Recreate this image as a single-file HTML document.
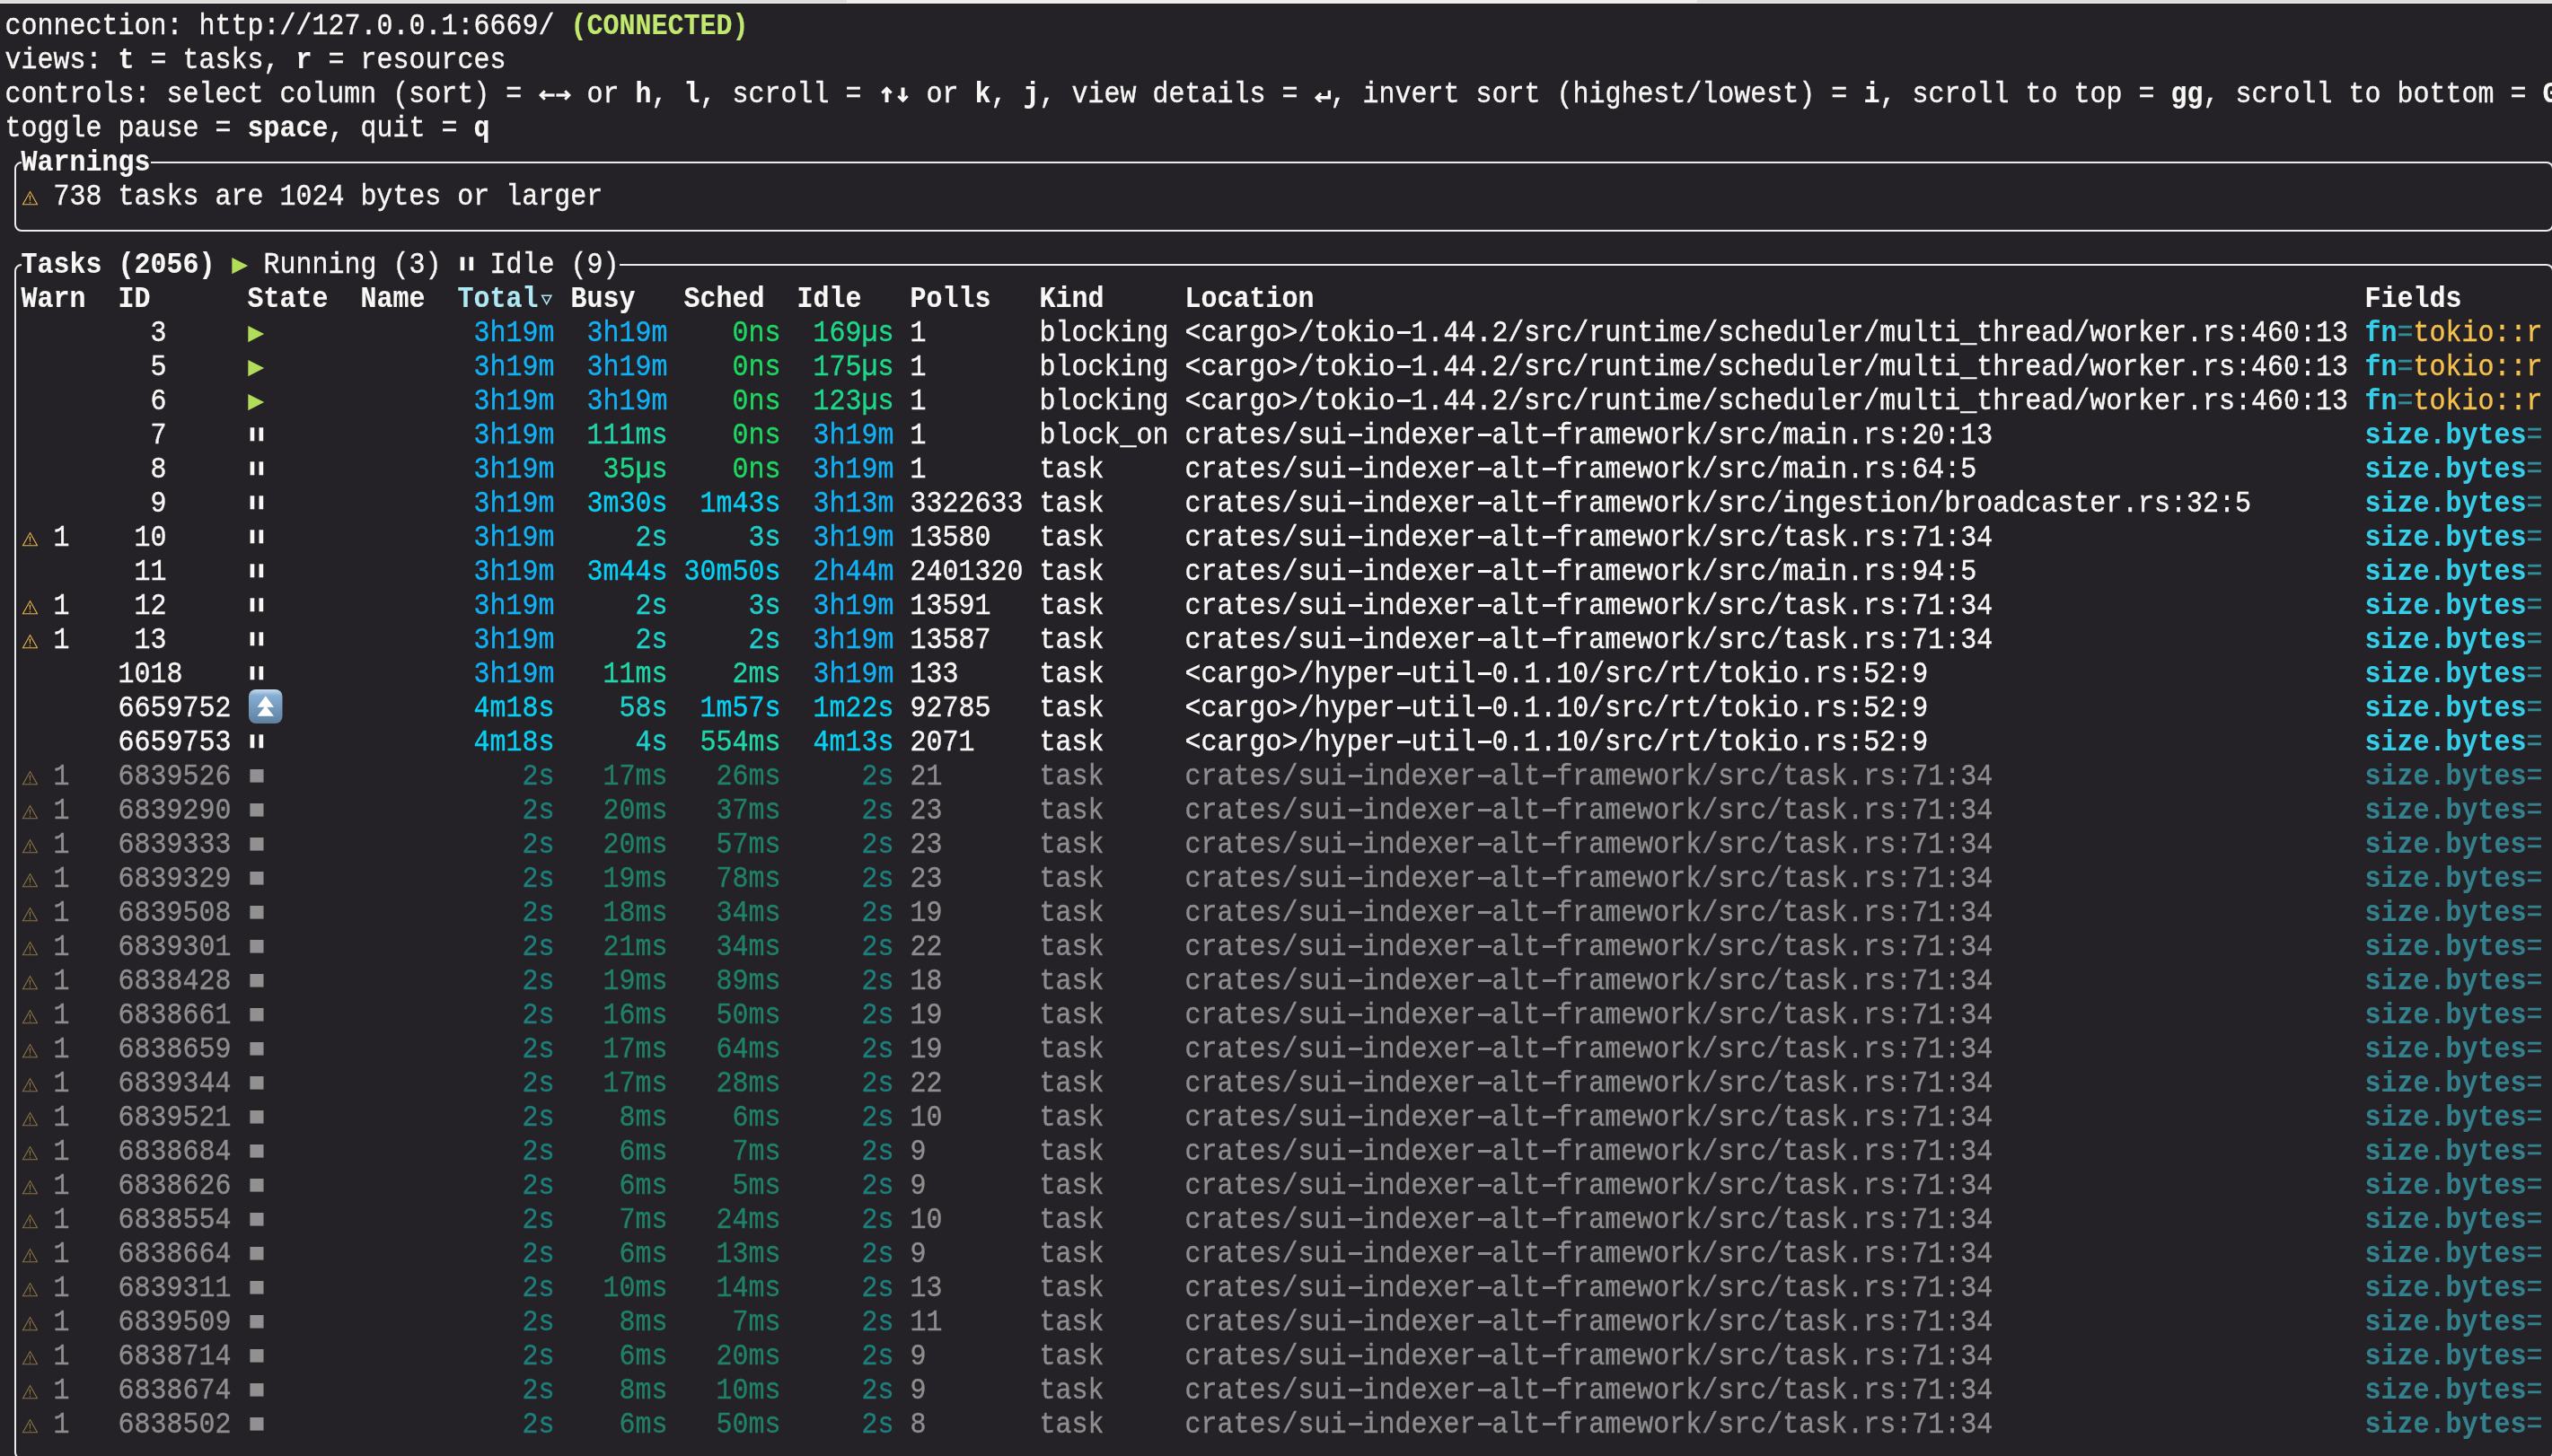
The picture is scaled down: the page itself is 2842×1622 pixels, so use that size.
<!DOCTYPE html><html><head><meta charset="utf-8"><style>
html,body{margin:0;padding:0}
body{width:2842px;height:1622px;background:#242226;overflow:hidden;position:relative}
.t{position:absolute;font-family:"Liberation Mono",monospace;font-size:29.9939px;line-height:38px;height:38px;white-space:pre;transform:scaleY(1.09);transform-origin:0 27.0px}
.t{-webkit-text-stroke:0.35px currentColor} .b{font-weight:bold;-webkit-text-stroke:0.1px currentColor}
.w{color:#f8f8f6} .g{color:#8e8e8e} .grn{color:#c1e86f} .tot{color:#aee9f4}
.ns{color:#1ed760} .us{color:#1ed88a} .ms{color:#20d6a8} .s{color:#1dd0cb} .m{color:#08d0f4} .h{color:#12b0f4}
.ds{color:#1d7f7c} .dms{color:#208168}
.fld{color:#36cde8} .fldd{color:#34818d} .eq{color:#2f8c98} .eqd{color:#34818d} .yel{color:#f5c04c}
.box{position:absolute;border:2.2px solid #ececec;border-radius:8px;box-sizing:border-box}
.ic{position:absolute}
</style></head><body>
<div style="position:absolute;left:0;top:0;width:943px;height:3px;background:#dfdedc"></div>
<div style="position:absolute;left:943px;top:0;width:947px;height:3px;background:#efeeec"></div>
<div style="position:absolute;left:1890px;top:0;width:952px;height:3px;background:#dfdedc"></div>
<div style="position:absolute;left:0;top:3px;width:2842px;height:1px;background:#f0f0f0"></div>
<div style="position:absolute;left:0;top:4px;width:2842px;height:1px;background:#1b1a1e"></div>
<div class="box" style="left:16px;top:179.7px;width:2828px;height:78.4px"></div>
<div class="box" style="left:16px;top:294.1px;width:2828px;height:1331.6px;border-radius:8px"></div>
<div style="position:absolute;left:23.5px;top:176px;width:144.0px;height:8px;background:#242226"></div>
<div style="position:absolute;left:23.5px;top:290px;width:666.0px;height:8px;background:#242226"></div>
<div style="position:absolute;left:0;top:0;width:2842px;height:1622px;will-change:transform">
<div class="t w" style="left:5.5px;top:11.07px">connection: http</div>
<div class="t w" style="left:293.5px;top:11.07px">:</div>
<div class="t w" style="left:311.5px;top:11.07px">//127.0.0.1:6669/ </div>
<div class="t grn b" style="left:635.5px;top:11.07px">(CONNECTED)</div>
<div class="t w" style="left:5.5px;top:49.07px">views: </div>
<div class="t w b" style="left:131.5px;top:49.07px">t</div>
<div class="t w" style="left:149.5px;top:49.07px"> = tasks, </div>
<div class="t w b" style="left:329.5px;top:49.07px">r</div>
<div class="t w" style="left:347.5px;top:49.07px"> = resources</div>
<div class="t w" style="left:5.5px;top:87.07px">controls: select column (sort) = </div>
<div class="t w b" style="left:599.5px;top:87.07px">  </div>
<div class="t w" style="left:635.5px;top:87.07px"> or </div>
<div class="t w b" style="left:707.5px;top:87.07px">h</div>
<div class="t w" style="left:725.5px;top:87.07px">, </div>
<div class="t w b" style="left:761.5px;top:87.07px">l</div>
<div class="t w" style="left:779.5px;top:87.07px">, scroll = </div>
<div class="t w b" style="left:977.5px;top:87.07px">  </div>
<div class="t w" style="left:1013.5px;top:87.07px"> or </div>
<div class="t w b" style="left:1085.5px;top:87.07px">k</div>
<div class="t w" style="left:1103.5px;top:87.07px">, </div>
<div class="t w b" style="left:1139.5px;top:87.07px">j</div>
<div class="t w" style="left:1157.5px;top:87.07px">, view details = </div>
<div class="t w b" style="left:1463.5px;top:87.07px"> </div>
<div class="t w" style="left:1481.5px;top:87.07px">, invert sort (highest/lowest) = </div>
<div class="t w b" style="left:2075.5px;top:87.07px">i</div>
<div class="t w" style="left:2093.5px;top:87.07px">, scroll to top = </div>
<div class="t w b" style="left:2417.5px;top:87.07px">gg</div>
<div class="t w" style="left:2453.5px;top:87.07px">, scroll to bottom = </div>
<div class="t w b" style="left:2831.5px;top:87.07px">G</div>
<div class="t w" style="left:5.5px;top:125.07px">toggle pause = </div>
<div class="t w b" style="left:275.5px;top:125.07px">space</div>
<div class="t w" style="left:365.5px;top:125.07px">, quit = </div>
<div class="t w b" style="left:527.5px;top:125.07px">q</div>
<div class="t w b" style="left:23.5px;top:163.07px">Warnings</div>
<div class="t w" style="left:59.5px;top:201.07px">738 tasks are 1024 bytes or larger</div>
<div class="t w b" style="left:23.5px;top:277.07px">Tasks (2056)</div>
<div class="t w" style="left:293.5px;top:277.07px">Running (3)</div>
<div class="t w" style="left:545.5px;top:277.07px">Idle (9)</div>
<div class="t w b" style="left:23.5px;top:315.07px">Warn</div>
<div class="t w b" style="left:131.5px;top:315.07px">ID</div>
<div class="t w b" style="left:275.5px;top:315.07px">State</div>
<div class="t w b" style="left:401.5px;top:315.07px">Name</div>
<div class="t w b" style="left:635.5px;top:315.07px">Busy</div>
<div class="t w b" style="left:761.5px;top:315.07px">Sched</div>
<div class="t w b" style="left:887.5px;top:315.07px">Idle</div>
<div class="t w b" style="left:1013.5px;top:315.07px">Polls</div>
<div class="t w b" style="left:1157.5px;top:315.07px">Kind</div>
<div class="t w b" style="left:1319.5px;top:315.07px">Location</div>
<div class="t w b" style="left:2633.5px;top:315.07px">Fields</div>
<div class="t tot b" style="left:509.5px;top:315.07px">Total</div>
<div class="t w" style="left:167.5px;top:353.07px">3</div>
<div class="t h" style="left:527.5px;top:353.07px">3h19m</div>
<div class="t h" style="left:653.5px;top:353.07px">3h19m</div>
<div class="t ns" style="left:815.5px;top:353.07px">0ns</div>
<div class="t us" style="left:905.5px;top:353.07px">169µs</div>
<div class="t w" style="left:1013.5px;top:353.07px">1</div>
<div class="t w" style="left:1157.5px;top:353.07px">blocking</div>
<div style="position:absolute;left:1555.7px;top:368.87px;width:15.4px;height:3px;background:#f8f8f6"></div>
<div class="t w" style="left:1319.5px;top:353.07px">&lt;cargo&gt;/tokio 1.44.2/src/runtime/scheduler/multi_thread/worker.rs:460:13</div>
<div class="t fld b" style="left:2633.5px;top:353.07px">fn</div>
<div class="t eq" style="left:2669.5px;top:353.07px">=</div>
<div class="t yel" style="left:2687.5px;top:353.07px">tokio::r</div>
<div class="t w" style="left:167.5px;top:391.07px">5</div>
<div class="t h" style="left:527.5px;top:391.07px">3h19m</div>
<div class="t h" style="left:653.5px;top:391.07px">3h19m</div>
<div class="t ns" style="left:815.5px;top:391.07px">0ns</div>
<div class="t us" style="left:905.5px;top:391.07px">175µs</div>
<div class="t w" style="left:1013.5px;top:391.07px">1</div>
<div class="t w" style="left:1157.5px;top:391.07px">blocking</div>
<div style="position:absolute;left:1555.7px;top:406.87px;width:15.4px;height:3px;background:#f8f8f6"></div>
<div class="t w" style="left:1319.5px;top:391.07px">&lt;cargo&gt;/tokio 1.44.2/src/runtime/scheduler/multi_thread/worker.rs:460:13</div>
<div class="t fld b" style="left:2633.5px;top:391.07px">fn</div>
<div class="t eq" style="left:2669.5px;top:391.07px">=</div>
<div class="t yel" style="left:2687.5px;top:391.07px">tokio::r</div>
<div class="t w" style="left:167.5px;top:429.07px">6</div>
<div class="t h" style="left:527.5px;top:429.07px">3h19m</div>
<div class="t h" style="left:653.5px;top:429.07px">3h19m</div>
<div class="t ns" style="left:815.5px;top:429.07px">0ns</div>
<div class="t us" style="left:905.5px;top:429.07px">123µs</div>
<div class="t w" style="left:1013.5px;top:429.07px">1</div>
<div class="t w" style="left:1157.5px;top:429.07px">blocking</div>
<div style="position:absolute;left:1555.7px;top:444.87px;width:15.4px;height:3px;background:#f8f8f6"></div>
<div class="t w" style="left:1319.5px;top:429.07px">&lt;cargo&gt;/tokio 1.44.2/src/runtime/scheduler/multi_thread/worker.rs:460:13</div>
<div class="t fld b" style="left:2633.5px;top:429.07px">fn</div>
<div class="t eq" style="left:2669.5px;top:429.07px">=</div>
<div class="t yel" style="left:2687.5px;top:429.07px">tokio::r</div>
<div class="t w" style="left:167.5px;top:467.07px">7</div>
<div class="t h" style="left:527.5px;top:467.07px">3h19m</div>
<div class="t ms" style="left:653.5px;top:467.07px">111ms</div>
<div class="t ns" style="left:815.5px;top:467.07px">0ns</div>
<div class="t h" style="left:905.5px;top:467.07px">3h19m</div>
<div class="t w" style="left:1013.5px;top:467.07px">1</div>
<div class="t w" style="left:1157.5px;top:467.07px">block_on</div>
<div style="position:absolute;left:1501.7px;top:482.87px;width:15.4px;height:3px;background:#f8f8f6"></div>
<div style="position:absolute;left:1645.7px;top:482.87px;width:15.4px;height:3px;background:#f8f8f6"></div>
<div style="position:absolute;left:1717.7px;top:482.87px;width:15.4px;height:3px;background:#f8f8f6"></div>
<div class="t w" style="left:1319.5px;top:467.07px">crates/sui indexer alt framework/src/main.rs:20:13</div>
<div class="t fld b" style="left:2633.5px;top:467.07px">size.bytes</div>
<div class="t eq" style="left:2813.5px;top:467.07px">=</div>
<div class="t w" style="left:167.5px;top:505.07px">8</div>
<div class="t h" style="left:527.5px;top:505.07px">3h19m</div>
<div class="t us" style="left:671.5px;top:505.07px">35µs</div>
<div class="t ns" style="left:815.5px;top:505.07px">0ns</div>
<div class="t h" style="left:905.5px;top:505.07px">3h19m</div>
<div class="t w" style="left:1013.5px;top:505.07px">1</div>
<div class="t w" style="left:1157.5px;top:505.07px">task</div>
<div style="position:absolute;left:1501.7px;top:520.87px;width:15.4px;height:3px;background:#f8f8f6"></div>
<div style="position:absolute;left:1645.7px;top:520.87px;width:15.4px;height:3px;background:#f8f8f6"></div>
<div style="position:absolute;left:1717.7px;top:520.87px;width:15.4px;height:3px;background:#f8f8f6"></div>
<div class="t w" style="left:1319.5px;top:505.07px">crates/sui indexer alt framework/src/main.rs:64:5</div>
<div class="t fld b" style="left:2633.5px;top:505.07px">size.bytes</div>
<div class="t eq" style="left:2813.5px;top:505.07px">=</div>
<div class="t w" style="left:167.5px;top:543.07px">9</div>
<div class="t h" style="left:527.5px;top:543.07px">3h19m</div>
<div class="t m" style="left:653.5px;top:543.07px">3m30s</div>
<div class="t m" style="left:779.5px;top:543.07px">1m43s</div>
<div class="t h" style="left:905.5px;top:543.07px">3h13m</div>
<div class="t w" style="left:1013.5px;top:543.07px">3322633</div>
<div class="t w" style="left:1157.5px;top:543.07px">task</div>
<div style="position:absolute;left:1501.7px;top:558.87px;width:15.4px;height:3px;background:#f8f8f6"></div>
<div style="position:absolute;left:1645.7px;top:558.87px;width:15.4px;height:3px;background:#f8f8f6"></div>
<div style="position:absolute;left:1717.7px;top:558.87px;width:15.4px;height:3px;background:#f8f8f6"></div>
<div class="t w" style="left:1319.5px;top:543.07px">crates/sui indexer alt framework/src/ingestion/broadcaster.rs:32:5</div>
<div class="t fld b" style="left:2633.5px;top:543.07px">size.bytes</div>
<div class="t eq" style="left:2813.5px;top:543.07px">=</div>
<div class="t w" style="left:59.5px;top:581.07px">1</div>
<div class="t w" style="left:149.5px;top:581.07px">10</div>
<div class="t h" style="left:527.5px;top:581.07px">3h19m</div>
<div class="t s" style="left:707.5px;top:581.07px">2s</div>
<div class="t s" style="left:833.5px;top:581.07px">3s</div>
<div class="t h" style="left:905.5px;top:581.07px">3h19m</div>
<div class="t w" style="left:1013.5px;top:581.07px">13580</div>
<div class="t w" style="left:1157.5px;top:581.07px">task</div>
<div style="position:absolute;left:1501.7px;top:596.87px;width:15.4px;height:3px;background:#f8f8f6"></div>
<div style="position:absolute;left:1645.7px;top:596.87px;width:15.4px;height:3px;background:#f8f8f6"></div>
<div style="position:absolute;left:1717.7px;top:596.87px;width:15.4px;height:3px;background:#f8f8f6"></div>
<div class="t w" style="left:1319.5px;top:581.07px">crates/sui indexer alt framework/src/task.rs:71:34</div>
<div class="t fld b" style="left:2633.5px;top:581.07px">size.bytes</div>
<div class="t eq" style="left:2813.5px;top:581.07px">=</div>
<div class="t w" style="left:149.5px;top:619.07px">11</div>
<div class="t h" style="left:527.5px;top:619.07px">3h19m</div>
<div class="t m" style="left:653.5px;top:619.07px">3m44s</div>
<div class="t m" style="left:761.5px;top:619.07px">30m50s</div>
<div class="t h" style="left:905.5px;top:619.07px">2h44m</div>
<div class="t w" style="left:1013.5px;top:619.07px">2401320</div>
<div class="t w" style="left:1157.5px;top:619.07px">task</div>
<div style="position:absolute;left:1501.7px;top:634.87px;width:15.4px;height:3px;background:#f8f8f6"></div>
<div style="position:absolute;left:1645.7px;top:634.87px;width:15.4px;height:3px;background:#f8f8f6"></div>
<div style="position:absolute;left:1717.7px;top:634.87px;width:15.4px;height:3px;background:#f8f8f6"></div>
<div class="t w" style="left:1319.5px;top:619.07px">crates/sui indexer alt framework/src/main.rs:94:5</div>
<div class="t fld b" style="left:2633.5px;top:619.07px">size.bytes</div>
<div class="t eq" style="left:2813.5px;top:619.07px">=</div>
<div class="t w" style="left:59.5px;top:657.07px">1</div>
<div class="t w" style="left:149.5px;top:657.07px">12</div>
<div class="t h" style="left:527.5px;top:657.07px">3h19m</div>
<div class="t s" style="left:707.5px;top:657.07px">2s</div>
<div class="t s" style="left:833.5px;top:657.07px">3s</div>
<div class="t h" style="left:905.5px;top:657.07px">3h19m</div>
<div class="t w" style="left:1013.5px;top:657.07px">13591</div>
<div class="t w" style="left:1157.5px;top:657.07px">task</div>
<div style="position:absolute;left:1501.7px;top:672.87px;width:15.4px;height:3px;background:#f8f8f6"></div>
<div style="position:absolute;left:1645.7px;top:672.87px;width:15.4px;height:3px;background:#f8f8f6"></div>
<div style="position:absolute;left:1717.7px;top:672.87px;width:15.4px;height:3px;background:#f8f8f6"></div>
<div class="t w" style="left:1319.5px;top:657.07px">crates/sui indexer alt framework/src/task.rs:71:34</div>
<div class="t fld b" style="left:2633.5px;top:657.07px">size.bytes</div>
<div class="t eq" style="left:2813.5px;top:657.07px">=</div>
<div class="t w" style="left:59.5px;top:695.07px">1</div>
<div class="t w" style="left:149.5px;top:695.07px">13</div>
<div class="t h" style="left:527.5px;top:695.07px">3h19m</div>
<div class="t s" style="left:707.5px;top:695.07px">2s</div>
<div class="t s" style="left:833.5px;top:695.07px">2s</div>
<div class="t h" style="left:905.5px;top:695.07px">3h19m</div>
<div class="t w" style="left:1013.5px;top:695.07px">13587</div>
<div class="t w" style="left:1157.5px;top:695.07px">task</div>
<div style="position:absolute;left:1501.7px;top:710.87px;width:15.4px;height:3px;background:#f8f8f6"></div>
<div style="position:absolute;left:1645.7px;top:710.87px;width:15.4px;height:3px;background:#f8f8f6"></div>
<div style="position:absolute;left:1717.7px;top:710.87px;width:15.4px;height:3px;background:#f8f8f6"></div>
<div class="t w" style="left:1319.5px;top:695.07px">crates/sui indexer alt framework/src/task.rs:71:34</div>
<div class="t fld b" style="left:2633.5px;top:695.07px">size.bytes</div>
<div class="t eq" style="left:2813.5px;top:695.07px">=</div>
<div class="t w" style="left:131.5px;top:733.07px">1018</div>
<div class="t h" style="left:527.5px;top:733.07px">3h19m</div>
<div class="t ms" style="left:671.5px;top:733.07px">11ms</div>
<div class="t ms" style="left:815.5px;top:733.07px">2ms</div>
<div class="t h" style="left:905.5px;top:733.07px">3h19m</div>
<div class="t w" style="left:1013.5px;top:733.07px">133</div>
<div class="t w" style="left:1157.5px;top:733.07px">task</div>
<div style="position:absolute;left:1555.7px;top:748.87px;width:15.4px;height:3px;background:#f8f8f6"></div>
<div style="position:absolute;left:1645.7px;top:748.87px;width:15.4px;height:3px;background:#f8f8f6"></div>
<div class="t w" style="left:1319.5px;top:733.07px">&lt;cargo&gt;/hyper util 0.1.10/src/rt/tokio.rs:52:9</div>
<div class="t fld b" style="left:2633.5px;top:733.07px">size.bytes</div>
<div class="t eq" style="left:2813.5px;top:733.07px">=</div>
<div class="t w" style="left:131.5px;top:771.07px">6659752</div>
<div class="t m" style="left:527.5px;top:771.07px">4m18s</div>
<div class="t s" style="left:689.5px;top:771.07px">58s</div>
<div class="t m" style="left:779.5px;top:771.07px">1m57s</div>
<div class="t m" style="left:905.5px;top:771.07px">1m22s</div>
<div class="t w" style="left:1013.5px;top:771.07px">92785</div>
<div class="t w" style="left:1157.5px;top:771.07px">task</div>
<div style="position:absolute;left:1555.7px;top:786.87px;width:15.4px;height:3px;background:#f8f8f6"></div>
<div style="position:absolute;left:1645.7px;top:786.87px;width:15.4px;height:3px;background:#f8f8f6"></div>
<div class="t w" style="left:1319.5px;top:771.07px">&lt;cargo&gt;/hyper util 0.1.10/src/rt/tokio.rs:52:9</div>
<div class="t fld b" style="left:2633.5px;top:771.07px">size.bytes</div>
<div class="t eq" style="left:2813.5px;top:771.07px">=</div>
<div class="t w" style="left:131.5px;top:809.07px">6659753</div>
<div class="t m" style="left:527.5px;top:809.07px">4m18s</div>
<div class="t s" style="left:707.5px;top:809.07px">4s</div>
<div class="t ms" style="left:779.5px;top:809.07px">554ms</div>
<div class="t m" style="left:905.5px;top:809.07px">4m13s</div>
<div class="t w" style="left:1013.5px;top:809.07px">2071</div>
<div class="t w" style="left:1157.5px;top:809.07px">task</div>
<div style="position:absolute;left:1555.7px;top:824.87px;width:15.4px;height:3px;background:#f8f8f6"></div>
<div style="position:absolute;left:1645.7px;top:824.87px;width:15.4px;height:3px;background:#f8f8f6"></div>
<div class="t w" style="left:1319.5px;top:809.07px">&lt;cargo&gt;/hyper util 0.1.10/src/rt/tokio.rs:52:9</div>
<div class="t fld b" style="left:2633.5px;top:809.07px">size.bytes</div>
<div class="t eq" style="left:2813.5px;top:809.07px">=</div>
<div class="t g" style="left:59.5px;top:847.07px">1</div>
<div class="t g" style="left:131.5px;top:847.07px">6839526</div>
<div class="t ds" style="left:581.5px;top:847.07px">2s</div>
<div class="t dms" style="left:671.5px;top:847.07px">17ms</div>
<div class="t dms" style="left:797.5px;top:847.07px">26ms</div>
<div class="t ds" style="left:959.5px;top:847.07px">2s</div>
<div class="t g" style="left:1013.5px;top:847.07px">21</div>
<div class="t g" style="left:1157.5px;top:847.07px">task</div>
<div style="position:absolute;left:1501.7px;top:862.87px;width:15.4px;height:3px;background:#8e8e8e"></div>
<div style="position:absolute;left:1645.7px;top:862.87px;width:15.4px;height:3px;background:#8e8e8e"></div>
<div style="position:absolute;left:1717.7px;top:862.87px;width:15.4px;height:3px;background:#8e8e8e"></div>
<div class="t g" style="left:1319.5px;top:847.07px">crates/sui indexer alt framework/src/task.rs:71:34</div>
<div class="t fldd b" style="left:2633.5px;top:847.07px">size.bytes</div>
<div class="t eqd" style="left:2813.5px;top:847.07px">=</div>
<div class="t g" style="left:59.5px;top:885.07px">1</div>
<div class="t g" style="left:131.5px;top:885.07px">6839290</div>
<div class="t ds" style="left:581.5px;top:885.07px">2s</div>
<div class="t dms" style="left:671.5px;top:885.07px">20ms</div>
<div class="t dms" style="left:797.5px;top:885.07px">37ms</div>
<div class="t ds" style="left:959.5px;top:885.07px">2s</div>
<div class="t g" style="left:1013.5px;top:885.07px">23</div>
<div class="t g" style="left:1157.5px;top:885.07px">task</div>
<div style="position:absolute;left:1501.7px;top:900.87px;width:15.4px;height:3px;background:#8e8e8e"></div>
<div style="position:absolute;left:1645.7px;top:900.87px;width:15.4px;height:3px;background:#8e8e8e"></div>
<div style="position:absolute;left:1717.7px;top:900.87px;width:15.4px;height:3px;background:#8e8e8e"></div>
<div class="t g" style="left:1319.5px;top:885.07px">crates/sui indexer alt framework/src/task.rs:71:34</div>
<div class="t fldd b" style="left:2633.5px;top:885.07px">size.bytes</div>
<div class="t eqd" style="left:2813.5px;top:885.07px">=</div>
<div class="t g" style="left:59.5px;top:923.07px">1</div>
<div class="t g" style="left:131.5px;top:923.07px">6839333</div>
<div class="t ds" style="left:581.5px;top:923.07px">2s</div>
<div class="t dms" style="left:671.5px;top:923.07px">20ms</div>
<div class="t dms" style="left:797.5px;top:923.07px">57ms</div>
<div class="t ds" style="left:959.5px;top:923.07px">2s</div>
<div class="t g" style="left:1013.5px;top:923.07px">23</div>
<div class="t g" style="left:1157.5px;top:923.07px">task</div>
<div style="position:absolute;left:1501.7px;top:938.87px;width:15.4px;height:3px;background:#8e8e8e"></div>
<div style="position:absolute;left:1645.7px;top:938.87px;width:15.4px;height:3px;background:#8e8e8e"></div>
<div style="position:absolute;left:1717.7px;top:938.87px;width:15.4px;height:3px;background:#8e8e8e"></div>
<div class="t g" style="left:1319.5px;top:923.07px">crates/sui indexer alt framework/src/task.rs:71:34</div>
<div class="t fldd b" style="left:2633.5px;top:923.07px">size.bytes</div>
<div class="t eqd" style="left:2813.5px;top:923.07px">=</div>
<div class="t g" style="left:59.5px;top:961.07px">1</div>
<div class="t g" style="left:131.5px;top:961.07px">6839329</div>
<div class="t ds" style="left:581.5px;top:961.07px">2s</div>
<div class="t dms" style="left:671.5px;top:961.07px">19ms</div>
<div class="t dms" style="left:797.5px;top:961.07px">78ms</div>
<div class="t ds" style="left:959.5px;top:961.07px">2s</div>
<div class="t g" style="left:1013.5px;top:961.07px">23</div>
<div class="t g" style="left:1157.5px;top:961.07px">task</div>
<div style="position:absolute;left:1501.7px;top:976.87px;width:15.4px;height:3px;background:#8e8e8e"></div>
<div style="position:absolute;left:1645.7px;top:976.87px;width:15.4px;height:3px;background:#8e8e8e"></div>
<div style="position:absolute;left:1717.7px;top:976.87px;width:15.4px;height:3px;background:#8e8e8e"></div>
<div class="t g" style="left:1319.5px;top:961.07px">crates/sui indexer alt framework/src/task.rs:71:34</div>
<div class="t fldd b" style="left:2633.5px;top:961.07px">size.bytes</div>
<div class="t eqd" style="left:2813.5px;top:961.07px">=</div>
<div class="t g" style="left:59.5px;top:999.07px">1</div>
<div class="t g" style="left:131.5px;top:999.07px">6839508</div>
<div class="t ds" style="left:581.5px;top:999.07px">2s</div>
<div class="t dms" style="left:671.5px;top:999.07px">18ms</div>
<div class="t dms" style="left:797.5px;top:999.07px">34ms</div>
<div class="t ds" style="left:959.5px;top:999.07px">2s</div>
<div class="t g" style="left:1013.5px;top:999.07px">19</div>
<div class="t g" style="left:1157.5px;top:999.07px">task</div>
<div style="position:absolute;left:1501.7px;top:1014.87px;width:15.4px;height:3px;background:#8e8e8e"></div>
<div style="position:absolute;left:1645.7px;top:1014.87px;width:15.4px;height:3px;background:#8e8e8e"></div>
<div style="position:absolute;left:1717.7px;top:1014.87px;width:15.4px;height:3px;background:#8e8e8e"></div>
<div class="t g" style="left:1319.5px;top:999.07px">crates/sui indexer alt framework/src/task.rs:71:34</div>
<div class="t fldd b" style="left:2633.5px;top:999.07px">size.bytes</div>
<div class="t eqd" style="left:2813.5px;top:999.07px">=</div>
<div class="t g" style="left:59.5px;top:1037.07px">1</div>
<div class="t g" style="left:131.5px;top:1037.07px">6839301</div>
<div class="t ds" style="left:581.5px;top:1037.07px">2s</div>
<div class="t dms" style="left:671.5px;top:1037.07px">21ms</div>
<div class="t dms" style="left:797.5px;top:1037.07px">34ms</div>
<div class="t ds" style="left:959.5px;top:1037.07px">2s</div>
<div class="t g" style="left:1013.5px;top:1037.07px">22</div>
<div class="t g" style="left:1157.5px;top:1037.07px">task</div>
<div style="position:absolute;left:1501.7px;top:1052.87px;width:15.4px;height:3px;background:#8e8e8e"></div>
<div style="position:absolute;left:1645.7px;top:1052.87px;width:15.4px;height:3px;background:#8e8e8e"></div>
<div style="position:absolute;left:1717.7px;top:1052.87px;width:15.4px;height:3px;background:#8e8e8e"></div>
<div class="t g" style="left:1319.5px;top:1037.07px">crates/sui indexer alt framework/src/task.rs:71:34</div>
<div class="t fldd b" style="left:2633.5px;top:1037.07px">size.bytes</div>
<div class="t eqd" style="left:2813.5px;top:1037.07px">=</div>
<div class="t g" style="left:59.5px;top:1075.07px">1</div>
<div class="t g" style="left:131.5px;top:1075.07px">6838428</div>
<div class="t ds" style="left:581.5px;top:1075.07px">2s</div>
<div class="t dms" style="left:671.5px;top:1075.07px">19ms</div>
<div class="t dms" style="left:797.5px;top:1075.07px">89ms</div>
<div class="t ds" style="left:959.5px;top:1075.07px">2s</div>
<div class="t g" style="left:1013.5px;top:1075.07px">18</div>
<div class="t g" style="left:1157.5px;top:1075.07px">task</div>
<div style="position:absolute;left:1501.7px;top:1090.87px;width:15.4px;height:3px;background:#8e8e8e"></div>
<div style="position:absolute;left:1645.7px;top:1090.87px;width:15.4px;height:3px;background:#8e8e8e"></div>
<div style="position:absolute;left:1717.7px;top:1090.87px;width:15.4px;height:3px;background:#8e8e8e"></div>
<div class="t g" style="left:1319.5px;top:1075.07px">crates/sui indexer alt framework/src/task.rs:71:34</div>
<div class="t fldd b" style="left:2633.5px;top:1075.07px">size.bytes</div>
<div class="t eqd" style="left:2813.5px;top:1075.07px">=</div>
<div class="t g" style="left:59.5px;top:1113.07px">1</div>
<div class="t g" style="left:131.5px;top:1113.07px">6838661</div>
<div class="t ds" style="left:581.5px;top:1113.07px">2s</div>
<div class="t dms" style="left:671.5px;top:1113.07px">16ms</div>
<div class="t dms" style="left:797.5px;top:1113.07px">50ms</div>
<div class="t ds" style="left:959.5px;top:1113.07px">2s</div>
<div class="t g" style="left:1013.5px;top:1113.07px">19</div>
<div class="t g" style="left:1157.5px;top:1113.07px">task</div>
<div style="position:absolute;left:1501.7px;top:1128.87px;width:15.4px;height:3px;background:#8e8e8e"></div>
<div style="position:absolute;left:1645.7px;top:1128.87px;width:15.4px;height:3px;background:#8e8e8e"></div>
<div style="position:absolute;left:1717.7px;top:1128.87px;width:15.4px;height:3px;background:#8e8e8e"></div>
<div class="t g" style="left:1319.5px;top:1113.07px">crates/sui indexer alt framework/src/task.rs:71:34</div>
<div class="t fldd b" style="left:2633.5px;top:1113.07px">size.bytes</div>
<div class="t eqd" style="left:2813.5px;top:1113.07px">=</div>
<div class="t g" style="left:59.5px;top:1151.07px">1</div>
<div class="t g" style="left:131.5px;top:1151.07px">6838659</div>
<div class="t ds" style="left:581.5px;top:1151.07px">2s</div>
<div class="t dms" style="left:671.5px;top:1151.07px">17ms</div>
<div class="t dms" style="left:797.5px;top:1151.07px">64ms</div>
<div class="t ds" style="left:959.5px;top:1151.07px">2s</div>
<div class="t g" style="left:1013.5px;top:1151.07px">19</div>
<div class="t g" style="left:1157.5px;top:1151.07px">task</div>
<div style="position:absolute;left:1501.7px;top:1166.87px;width:15.4px;height:3px;background:#8e8e8e"></div>
<div style="position:absolute;left:1645.7px;top:1166.87px;width:15.4px;height:3px;background:#8e8e8e"></div>
<div style="position:absolute;left:1717.7px;top:1166.87px;width:15.4px;height:3px;background:#8e8e8e"></div>
<div class="t g" style="left:1319.5px;top:1151.07px">crates/sui indexer alt framework/src/task.rs:71:34</div>
<div class="t fldd b" style="left:2633.5px;top:1151.07px">size.bytes</div>
<div class="t eqd" style="left:2813.5px;top:1151.07px">=</div>
<div class="t g" style="left:59.5px;top:1189.07px">1</div>
<div class="t g" style="left:131.5px;top:1189.07px">6839344</div>
<div class="t ds" style="left:581.5px;top:1189.07px">2s</div>
<div class="t dms" style="left:671.5px;top:1189.07px">17ms</div>
<div class="t dms" style="left:797.5px;top:1189.07px">28ms</div>
<div class="t ds" style="left:959.5px;top:1189.07px">2s</div>
<div class="t g" style="left:1013.5px;top:1189.07px">22</div>
<div class="t g" style="left:1157.5px;top:1189.07px">task</div>
<div style="position:absolute;left:1501.7px;top:1204.87px;width:15.4px;height:3px;background:#8e8e8e"></div>
<div style="position:absolute;left:1645.7px;top:1204.87px;width:15.4px;height:3px;background:#8e8e8e"></div>
<div style="position:absolute;left:1717.7px;top:1204.87px;width:15.4px;height:3px;background:#8e8e8e"></div>
<div class="t g" style="left:1319.5px;top:1189.07px">crates/sui indexer alt framework/src/task.rs:71:34</div>
<div class="t fldd b" style="left:2633.5px;top:1189.07px">size.bytes</div>
<div class="t eqd" style="left:2813.5px;top:1189.07px">=</div>
<div class="t g" style="left:59.5px;top:1227.07px">1</div>
<div class="t g" style="left:131.5px;top:1227.07px">6839521</div>
<div class="t ds" style="left:581.5px;top:1227.07px">2s</div>
<div class="t dms" style="left:689.5px;top:1227.07px">8ms</div>
<div class="t dms" style="left:815.5px;top:1227.07px">6ms</div>
<div class="t ds" style="left:959.5px;top:1227.07px">2s</div>
<div class="t g" style="left:1013.5px;top:1227.07px">10</div>
<div class="t g" style="left:1157.5px;top:1227.07px">task</div>
<div style="position:absolute;left:1501.7px;top:1242.87px;width:15.4px;height:3px;background:#8e8e8e"></div>
<div style="position:absolute;left:1645.7px;top:1242.87px;width:15.4px;height:3px;background:#8e8e8e"></div>
<div style="position:absolute;left:1717.7px;top:1242.87px;width:15.4px;height:3px;background:#8e8e8e"></div>
<div class="t g" style="left:1319.5px;top:1227.07px">crates/sui indexer alt framework/src/task.rs:71:34</div>
<div class="t fldd b" style="left:2633.5px;top:1227.07px">size.bytes</div>
<div class="t eqd" style="left:2813.5px;top:1227.07px">=</div>
<div class="t g" style="left:59.5px;top:1265.07px">1</div>
<div class="t g" style="left:131.5px;top:1265.07px">6838684</div>
<div class="t ds" style="left:581.5px;top:1265.07px">2s</div>
<div class="t dms" style="left:689.5px;top:1265.07px">6ms</div>
<div class="t dms" style="left:815.5px;top:1265.07px">7ms</div>
<div class="t ds" style="left:959.5px;top:1265.07px">2s</div>
<div class="t g" style="left:1013.5px;top:1265.07px">9</div>
<div class="t g" style="left:1157.5px;top:1265.07px">task</div>
<div style="position:absolute;left:1501.7px;top:1280.87px;width:15.4px;height:3px;background:#8e8e8e"></div>
<div style="position:absolute;left:1645.7px;top:1280.87px;width:15.4px;height:3px;background:#8e8e8e"></div>
<div style="position:absolute;left:1717.7px;top:1280.87px;width:15.4px;height:3px;background:#8e8e8e"></div>
<div class="t g" style="left:1319.5px;top:1265.07px">crates/sui indexer alt framework/src/task.rs:71:34</div>
<div class="t fldd b" style="left:2633.5px;top:1265.07px">size.bytes</div>
<div class="t eqd" style="left:2813.5px;top:1265.07px">=</div>
<div class="t g" style="left:59.5px;top:1303.07px">1</div>
<div class="t g" style="left:131.5px;top:1303.07px">6838626</div>
<div class="t ds" style="left:581.5px;top:1303.07px">2s</div>
<div class="t dms" style="left:689.5px;top:1303.07px">6ms</div>
<div class="t dms" style="left:815.5px;top:1303.07px">5ms</div>
<div class="t ds" style="left:959.5px;top:1303.07px">2s</div>
<div class="t g" style="left:1013.5px;top:1303.07px">9</div>
<div class="t g" style="left:1157.5px;top:1303.07px">task</div>
<div style="position:absolute;left:1501.7px;top:1318.87px;width:15.4px;height:3px;background:#8e8e8e"></div>
<div style="position:absolute;left:1645.7px;top:1318.87px;width:15.4px;height:3px;background:#8e8e8e"></div>
<div style="position:absolute;left:1717.7px;top:1318.87px;width:15.4px;height:3px;background:#8e8e8e"></div>
<div class="t g" style="left:1319.5px;top:1303.07px">crates/sui indexer alt framework/src/task.rs:71:34</div>
<div class="t fldd b" style="left:2633.5px;top:1303.07px">size.bytes</div>
<div class="t eqd" style="left:2813.5px;top:1303.07px">=</div>
<div class="t g" style="left:59.5px;top:1341.07px">1</div>
<div class="t g" style="left:131.5px;top:1341.07px">6838554</div>
<div class="t ds" style="left:581.5px;top:1341.07px">2s</div>
<div class="t dms" style="left:689.5px;top:1341.07px">7ms</div>
<div class="t dms" style="left:797.5px;top:1341.07px">24ms</div>
<div class="t ds" style="left:959.5px;top:1341.07px">2s</div>
<div class="t g" style="left:1013.5px;top:1341.07px">10</div>
<div class="t g" style="left:1157.5px;top:1341.07px">task</div>
<div style="position:absolute;left:1501.7px;top:1356.87px;width:15.4px;height:3px;background:#8e8e8e"></div>
<div style="position:absolute;left:1645.7px;top:1356.87px;width:15.4px;height:3px;background:#8e8e8e"></div>
<div style="position:absolute;left:1717.7px;top:1356.87px;width:15.4px;height:3px;background:#8e8e8e"></div>
<div class="t g" style="left:1319.5px;top:1341.07px">crates/sui indexer alt framework/src/task.rs:71:34</div>
<div class="t fldd b" style="left:2633.5px;top:1341.07px">size.bytes</div>
<div class="t eqd" style="left:2813.5px;top:1341.07px">=</div>
<div class="t g" style="left:59.5px;top:1379.07px">1</div>
<div class="t g" style="left:131.5px;top:1379.07px">6838664</div>
<div class="t ds" style="left:581.5px;top:1379.07px">2s</div>
<div class="t dms" style="left:689.5px;top:1379.07px">6ms</div>
<div class="t dms" style="left:797.5px;top:1379.07px">13ms</div>
<div class="t ds" style="left:959.5px;top:1379.07px">2s</div>
<div class="t g" style="left:1013.5px;top:1379.07px">9</div>
<div class="t g" style="left:1157.5px;top:1379.07px">task</div>
<div style="position:absolute;left:1501.7px;top:1394.87px;width:15.4px;height:3px;background:#8e8e8e"></div>
<div style="position:absolute;left:1645.7px;top:1394.87px;width:15.4px;height:3px;background:#8e8e8e"></div>
<div style="position:absolute;left:1717.7px;top:1394.87px;width:15.4px;height:3px;background:#8e8e8e"></div>
<div class="t g" style="left:1319.5px;top:1379.07px">crates/sui indexer alt framework/src/task.rs:71:34</div>
<div class="t fldd b" style="left:2633.5px;top:1379.07px">size.bytes</div>
<div class="t eqd" style="left:2813.5px;top:1379.07px">=</div>
<div class="t g" style="left:59.5px;top:1417.07px">1</div>
<div class="t g" style="left:131.5px;top:1417.07px">6839311</div>
<div class="t ds" style="left:581.5px;top:1417.07px">2s</div>
<div class="t dms" style="left:671.5px;top:1417.07px">10ms</div>
<div class="t dms" style="left:797.5px;top:1417.07px">14ms</div>
<div class="t ds" style="left:959.5px;top:1417.07px">2s</div>
<div class="t g" style="left:1013.5px;top:1417.07px">13</div>
<div class="t g" style="left:1157.5px;top:1417.07px">task</div>
<div style="position:absolute;left:1501.7px;top:1432.87px;width:15.4px;height:3px;background:#8e8e8e"></div>
<div style="position:absolute;left:1645.7px;top:1432.87px;width:15.4px;height:3px;background:#8e8e8e"></div>
<div style="position:absolute;left:1717.7px;top:1432.87px;width:15.4px;height:3px;background:#8e8e8e"></div>
<div class="t g" style="left:1319.5px;top:1417.07px">crates/sui indexer alt framework/src/task.rs:71:34</div>
<div class="t fldd b" style="left:2633.5px;top:1417.07px">size.bytes</div>
<div class="t eqd" style="left:2813.5px;top:1417.07px">=</div>
<div class="t g" style="left:59.5px;top:1455.07px">1</div>
<div class="t g" style="left:131.5px;top:1455.07px">6839509</div>
<div class="t ds" style="left:581.5px;top:1455.07px">2s</div>
<div class="t dms" style="left:689.5px;top:1455.07px">8ms</div>
<div class="t dms" style="left:815.5px;top:1455.07px">7ms</div>
<div class="t ds" style="left:959.5px;top:1455.07px">2s</div>
<div class="t g" style="left:1013.5px;top:1455.07px">11</div>
<div class="t g" style="left:1157.5px;top:1455.07px">task</div>
<div style="position:absolute;left:1501.7px;top:1470.87px;width:15.4px;height:3px;background:#8e8e8e"></div>
<div style="position:absolute;left:1645.7px;top:1470.87px;width:15.4px;height:3px;background:#8e8e8e"></div>
<div style="position:absolute;left:1717.7px;top:1470.87px;width:15.4px;height:3px;background:#8e8e8e"></div>
<div class="t g" style="left:1319.5px;top:1455.07px">crates/sui indexer alt framework/src/task.rs:71:34</div>
<div class="t fldd b" style="left:2633.5px;top:1455.07px">size.bytes</div>
<div class="t eqd" style="left:2813.5px;top:1455.07px">=</div>
<div class="t g" style="left:59.5px;top:1493.07px">1</div>
<div class="t g" style="left:131.5px;top:1493.07px">6838714</div>
<div class="t ds" style="left:581.5px;top:1493.07px">2s</div>
<div class="t dms" style="left:689.5px;top:1493.07px">6ms</div>
<div class="t dms" style="left:797.5px;top:1493.07px">20ms</div>
<div class="t ds" style="left:959.5px;top:1493.07px">2s</div>
<div class="t g" style="left:1013.5px;top:1493.07px">9</div>
<div class="t g" style="left:1157.5px;top:1493.07px">task</div>
<div style="position:absolute;left:1501.7px;top:1508.87px;width:15.4px;height:3px;background:#8e8e8e"></div>
<div style="position:absolute;left:1645.7px;top:1508.87px;width:15.4px;height:3px;background:#8e8e8e"></div>
<div style="position:absolute;left:1717.7px;top:1508.87px;width:15.4px;height:3px;background:#8e8e8e"></div>
<div class="t g" style="left:1319.5px;top:1493.07px">crates/sui indexer alt framework/src/task.rs:71:34</div>
<div class="t fldd b" style="left:2633.5px;top:1493.07px">size.bytes</div>
<div class="t eqd" style="left:2813.5px;top:1493.07px">=</div>
<div class="t g" style="left:59.5px;top:1531.07px">1</div>
<div class="t g" style="left:131.5px;top:1531.07px">6838674</div>
<div class="t ds" style="left:581.5px;top:1531.07px">2s</div>
<div class="t dms" style="left:689.5px;top:1531.07px">8ms</div>
<div class="t dms" style="left:797.5px;top:1531.07px">10ms</div>
<div class="t ds" style="left:959.5px;top:1531.07px">2s</div>
<div class="t g" style="left:1013.5px;top:1531.07px">9</div>
<div class="t g" style="left:1157.5px;top:1531.07px">task</div>
<div style="position:absolute;left:1501.7px;top:1546.87px;width:15.4px;height:3px;background:#8e8e8e"></div>
<div style="position:absolute;left:1645.7px;top:1546.87px;width:15.4px;height:3px;background:#8e8e8e"></div>
<div style="position:absolute;left:1717.7px;top:1546.87px;width:15.4px;height:3px;background:#8e8e8e"></div>
<div class="t g" style="left:1319.5px;top:1531.07px">crates/sui indexer alt framework/src/task.rs:71:34</div>
<div class="t fldd b" style="left:2633.5px;top:1531.07px">size.bytes</div>
<div class="t eqd" style="left:2813.5px;top:1531.07px">=</div>
<div class="t g" style="left:59.5px;top:1569.07px">1</div>
<div class="t g" style="left:131.5px;top:1569.07px">6838502</div>
<div class="t ds" style="left:581.5px;top:1569.07px">2s</div>
<div class="t dms" style="left:689.5px;top:1569.07px">6ms</div>
<div class="t dms" style="left:797.5px;top:1569.07px">50ms</div>
<div class="t ds" style="left:959.5px;top:1569.07px">2s</div>
<div class="t g" style="left:1013.5px;top:1569.07px">8</div>
<div class="t g" style="left:1157.5px;top:1569.07px">task</div>
<div style="position:absolute;left:1501.7px;top:1584.87px;width:15.4px;height:3px;background:#8e8e8e"></div>
<div style="position:absolute;left:1645.7px;top:1584.87px;width:15.4px;height:3px;background:#8e8e8e"></div>
<div style="position:absolute;left:1717.7px;top:1584.87px;width:15.4px;height:3px;background:#8e8e8e"></div>
<div class="t g" style="left:1319.5px;top:1569.07px">crates/sui indexer alt framework/src/task.rs:71:34</div>
<div class="t fldd b" style="left:2633.5px;top:1569.07px">size.bytes</div>
<div class="t eqd" style="left:2813.5px;top:1569.07px">=</div>
</div>
<svg class="ic" style="left:599.5px;top:98.07px" width="19" height="16" viewBox="0 0 19 16"><path d="M3 8 L17.6 8" stroke="#f8f8f6" stroke-width="3.3"/><path d="M6.8 3.2 L2 8 L6.8 12.8" fill="none" stroke="#f8f8f6" stroke-width="3" stroke-linecap="butt" stroke-linejoin="miter"/></svg>
<svg class="ic" style="left:616.5px;top:98.07px" width="19" height="16" viewBox="0 0 19 16"><path d="M2.4 8 L16.5 8" stroke="#f8f8f6" stroke-width="3.3"/><path d="M12.2 3.2 L17 8 L12.2 12.8" fill="none" stroke="#f8f8f6" stroke-width="3" stroke-linecap="butt" stroke-linejoin="miter"/></svg>
<svg class="ic" style="left:977.5px;top:96.07px" width="18" height="18" viewBox="0 0 18 18"><path d="M9.5 3 L9.5 18" stroke="#f8f8f6" stroke-width="4"/><path d="M4.3 7.6 L9.5 2.4 L14.7 7.6" fill="none" stroke="#f8f8f6" stroke-width="3" stroke-linejoin="miter"/></svg>
<svg class="ic" style="left:995.5px;top:96.07px" width="18" height="18" viewBox="0 0 18 18"><path d="M9.5 1.5 L9.5 16" stroke="#f8f8f6" stroke-width="4"/><path d="M4.3 11 L9.5 16.2 L14.7 11" fill="none" stroke="#f8f8f6" stroke-width="3" stroke-linejoin="miter"/></svg>
<svg class="ic" style="left:1463.5px;top:98.07px" width="18" height="16" viewBox="0 0 18 16"><path d="M16.4 2.8 L16.4 10.8 L3 10.8" fill="none" stroke="#f8f8f6" stroke-width="3.6" stroke-linejoin="miter"/><path d="M7.1 5.8 L2 10.9 L7.1 16" fill="none" stroke="#f8f8f6" stroke-width="3" stroke-linejoin="miter"/></svg>
<svg class="ic" style="left:275.5px;top:363.07px" width="19" height="19" viewBox="0 0 19 19"><path d="M0.3 0 L18.2 9.1 L0.3 18.2 Z" fill="#b2dd5a"/></svg>
<svg class="ic" style="left:275.5px;top:401.07px" width="19" height="19" viewBox="0 0 19 19"><path d="M0.3 0 L18.2 9.1 L0.3 18.2 Z" fill="#b2dd5a"/></svg>
<svg class="ic" style="left:275.5px;top:439.07px" width="19" height="19" viewBox="0 0 19 19"><path d="M0.3 0 L18.2 9.1 L0.3 18.2 Z" fill="#b2dd5a"/></svg>
<svg class="ic" style="left:275.5px;top:476.07px" width="18" height="16" viewBox="0 0 18 16"><rect x="2.6" y="0.3" width="4.7" height="15" fill="#f8f8f6"/><rect x="12.5" y="0.3" width="4.7" height="15" fill="#f8f8f6"/></svg>
<svg class="ic" style="left:275.5px;top:514.07px" width="18" height="16" viewBox="0 0 18 16"><rect x="2.6" y="0.3" width="4.7" height="15" fill="#f8f8f6"/><rect x="12.5" y="0.3" width="4.7" height="15" fill="#f8f8f6"/></svg>
<svg class="ic" style="left:275.5px;top:552.07px" width="18" height="16" viewBox="0 0 18 16"><rect x="2.6" y="0.3" width="4.7" height="15" fill="#f8f8f6"/><rect x="12.5" y="0.3" width="4.7" height="15" fill="#f8f8f6"/></svg>
<svg class="ic" style="left:23.5px;top:591.57px" width="18" height="18" viewBox="0 0 18 18"><path d="M9.5 1.6 L17.5 15.8 L1.5 15.8 Z" fill="none" stroke="#eab54a" stroke-width="1.1" stroke-linejoin="miter"/><path d="M8.6 5.8 L10.2 5.8 L9.7 12 L9.1 12 Z" fill="#eab54a"/><circle cx="9.4" cy="13.8" r="0.8" fill="#eab54a"/></svg>
<svg class="ic" style="left:275.5px;top:590.07px" width="18" height="16" viewBox="0 0 18 16"><rect x="2.6" y="0.3" width="4.7" height="15" fill="#f8f8f6"/><rect x="12.5" y="0.3" width="4.7" height="15" fill="#f8f8f6"/></svg>
<svg class="ic" style="left:275.5px;top:628.07px" width="18" height="16" viewBox="0 0 18 16"><rect x="2.6" y="0.3" width="4.7" height="15" fill="#f8f8f6"/><rect x="12.5" y="0.3" width="4.7" height="15" fill="#f8f8f6"/></svg>
<svg class="ic" style="left:23.5px;top:667.57px" width="18" height="18" viewBox="0 0 18 18"><path d="M9.5 1.6 L17.5 15.8 L1.5 15.8 Z" fill="none" stroke="#eab54a" stroke-width="1.1" stroke-linejoin="miter"/><path d="M8.6 5.8 L10.2 5.8 L9.7 12 L9.1 12 Z" fill="#eab54a"/><circle cx="9.4" cy="13.8" r="0.8" fill="#eab54a"/></svg>
<svg class="ic" style="left:275.5px;top:666.07px" width="18" height="16" viewBox="0 0 18 16"><rect x="2.6" y="0.3" width="4.7" height="15" fill="#f8f8f6"/><rect x="12.5" y="0.3" width="4.7" height="15" fill="#f8f8f6"/></svg>
<svg class="ic" style="left:23.5px;top:705.57px" width="18" height="18" viewBox="0 0 18 18"><path d="M9.5 1.6 L17.5 15.8 L1.5 15.8 Z" fill="none" stroke="#eab54a" stroke-width="1.1" stroke-linejoin="miter"/><path d="M8.6 5.8 L10.2 5.8 L9.7 12 L9.1 12 Z" fill="#eab54a"/><circle cx="9.4" cy="13.8" r="0.8" fill="#eab54a"/></svg>
<svg class="ic" style="left:275.5px;top:704.07px" width="18" height="16" viewBox="0 0 18 16"><rect x="2.6" y="0.3" width="4.7" height="15" fill="#f8f8f6"/><rect x="12.5" y="0.3" width="4.7" height="15" fill="#f8f8f6"/></svg>
<svg class="ic" style="left:275.5px;top:742.07px" width="18" height="16" viewBox="0 0 18 16"><rect x="2.6" y="0.3" width="4.7" height="15" fill="#f8f8f6"/><rect x="12.5" y="0.3" width="4.7" height="15" fill="#f8f8f6"/></svg>
<svg class="ic" style="left:277.3px;top:768.07px" width="38" height="38" viewBox="0 0 38 38"><defs><linearGradient id="eg" x1="0" y1="0" x2="0" y2="1"><stop offset="0" stop-color="#c9dcee"/><stop offset="0.18" stop-color="#86aed3"/><stop offset="1" stop-color="#5f7f9e"/></linearGradient></defs><rect x="0" y="0" width="37.5" height="38" rx="8" fill="url(#eg)"/><path d="M18.8 7.2 L28 19.8 L9.6 19.8 Z M18.8 18 L28 29.8 L9.6 29.8 Z" fill="#fff"/></svg>
<svg class="ic" style="left:275.5px;top:818.07px" width="18" height="16" viewBox="0 0 18 16"><rect x="2.6" y="0.3" width="4.7" height="15" fill="#f8f8f6"/><rect x="12.5" y="0.3" width="4.7" height="15" fill="#f8f8f6"/></svg>
<svg class="ic" style="left:23.5px;top:857.57px" width="18" height="18" viewBox="0 0 18 18"><path d="M9.5 1.6 L17.5 15.8 L1.5 15.8 Z" fill="none" stroke="#8a7343" stroke-width="1.1" stroke-linejoin="miter"/><path d="M8.6 5.8 L10.2 5.8 L9.7 12 L9.1 12 Z" fill="#8a7343"/><circle cx="9.4" cy="13.8" r="0.8" fill="#8a7343"/></svg>
<svg class="ic" style="left:275.5px;top:856.57px" width="18" height="16" viewBox="0 0 18 16"><rect x="2.4" y="0" width="15.1" height="14.6" fill="#919191"/></svg>
<svg class="ic" style="left:23.5px;top:895.57px" width="18" height="18" viewBox="0 0 18 18"><path d="M9.5 1.6 L17.5 15.8 L1.5 15.8 Z" fill="none" stroke="#8a7343" stroke-width="1.1" stroke-linejoin="miter"/><path d="M8.6 5.8 L10.2 5.8 L9.7 12 L9.1 12 Z" fill="#8a7343"/><circle cx="9.4" cy="13.8" r="0.8" fill="#8a7343"/></svg>
<svg class="ic" style="left:275.5px;top:894.57px" width="18" height="16" viewBox="0 0 18 16"><rect x="2.4" y="0" width="15.1" height="14.6" fill="#919191"/></svg>
<svg class="ic" style="left:23.5px;top:933.57px" width="18" height="18" viewBox="0 0 18 18"><path d="M9.5 1.6 L17.5 15.8 L1.5 15.8 Z" fill="none" stroke="#8a7343" stroke-width="1.1" stroke-linejoin="miter"/><path d="M8.6 5.8 L10.2 5.8 L9.7 12 L9.1 12 Z" fill="#8a7343"/><circle cx="9.4" cy="13.8" r="0.8" fill="#8a7343"/></svg>
<svg class="ic" style="left:275.5px;top:932.57px" width="18" height="16" viewBox="0 0 18 16"><rect x="2.4" y="0" width="15.1" height="14.6" fill="#919191"/></svg>
<svg class="ic" style="left:23.5px;top:971.57px" width="18" height="18" viewBox="0 0 18 18"><path d="M9.5 1.6 L17.5 15.8 L1.5 15.8 Z" fill="none" stroke="#8a7343" stroke-width="1.1" stroke-linejoin="miter"/><path d="M8.6 5.8 L10.2 5.8 L9.7 12 L9.1 12 Z" fill="#8a7343"/><circle cx="9.4" cy="13.8" r="0.8" fill="#8a7343"/></svg>
<svg class="ic" style="left:275.5px;top:970.57px" width="18" height="16" viewBox="0 0 18 16"><rect x="2.4" y="0" width="15.1" height="14.6" fill="#919191"/></svg>
<svg class="ic" style="left:23.5px;top:1009.5699999999999px" width="18" height="18" viewBox="0 0 18 18"><path d="M9.5 1.6 L17.5 15.8 L1.5 15.8 Z" fill="none" stroke="#8a7343" stroke-width="1.1" stroke-linejoin="miter"/><path d="M8.6 5.8 L10.2 5.8 L9.7 12 L9.1 12 Z" fill="#8a7343"/><circle cx="9.4" cy="13.8" r="0.8" fill="#8a7343"/></svg>
<svg class="ic" style="left:275.5px;top:1008.5699999999999px" width="18" height="16" viewBox="0 0 18 16"><rect x="2.4" y="0" width="15.1" height="14.6" fill="#919191"/></svg>
<svg class="ic" style="left:23.5px;top:1047.57px" width="18" height="18" viewBox="0 0 18 18"><path d="M9.5 1.6 L17.5 15.8 L1.5 15.8 Z" fill="none" stroke="#8a7343" stroke-width="1.1" stroke-linejoin="miter"/><path d="M8.6 5.8 L10.2 5.8 L9.7 12 L9.1 12 Z" fill="#8a7343"/><circle cx="9.4" cy="13.8" r="0.8" fill="#8a7343"/></svg>
<svg class="ic" style="left:275.5px;top:1046.57px" width="18" height="16" viewBox="0 0 18 16"><rect x="2.4" y="0" width="15.1" height="14.6" fill="#919191"/></svg>
<svg class="ic" style="left:23.5px;top:1085.57px" width="18" height="18" viewBox="0 0 18 18"><path d="M9.5 1.6 L17.5 15.8 L1.5 15.8 Z" fill="none" stroke="#8a7343" stroke-width="1.1" stroke-linejoin="miter"/><path d="M8.6 5.8 L10.2 5.8 L9.7 12 L9.1 12 Z" fill="#8a7343"/><circle cx="9.4" cy="13.8" r="0.8" fill="#8a7343"/></svg>
<svg class="ic" style="left:275.5px;top:1084.57px" width="18" height="16" viewBox="0 0 18 16"><rect x="2.4" y="0" width="15.1" height="14.6" fill="#919191"/></svg>
<svg class="ic" style="left:23.5px;top:1123.57px" width="18" height="18" viewBox="0 0 18 18"><path d="M9.5 1.6 L17.5 15.8 L1.5 15.8 Z" fill="none" stroke="#8a7343" stroke-width="1.1" stroke-linejoin="miter"/><path d="M8.6 5.8 L10.2 5.8 L9.7 12 L9.1 12 Z" fill="#8a7343"/><circle cx="9.4" cy="13.8" r="0.8" fill="#8a7343"/></svg>
<svg class="ic" style="left:275.5px;top:1122.57px" width="18" height="16" viewBox="0 0 18 16"><rect x="2.4" y="0" width="15.1" height="14.6" fill="#919191"/></svg>
<svg class="ic" style="left:23.5px;top:1161.57px" width="18" height="18" viewBox="0 0 18 18"><path d="M9.5 1.6 L17.5 15.8 L1.5 15.8 Z" fill="none" stroke="#8a7343" stroke-width="1.1" stroke-linejoin="miter"/><path d="M8.6 5.8 L10.2 5.8 L9.7 12 L9.1 12 Z" fill="#8a7343"/><circle cx="9.4" cy="13.8" r="0.8" fill="#8a7343"/></svg>
<svg class="ic" style="left:275.5px;top:1160.57px" width="18" height="16" viewBox="0 0 18 16"><rect x="2.4" y="0" width="15.1" height="14.6" fill="#919191"/></svg>
<svg class="ic" style="left:23.5px;top:1199.57px" width="18" height="18" viewBox="0 0 18 18"><path d="M9.5 1.6 L17.5 15.8 L1.5 15.8 Z" fill="none" stroke="#8a7343" stroke-width="1.1" stroke-linejoin="miter"/><path d="M8.6 5.8 L10.2 5.8 L9.7 12 L9.1 12 Z" fill="#8a7343"/><circle cx="9.4" cy="13.8" r="0.8" fill="#8a7343"/></svg>
<svg class="ic" style="left:275.5px;top:1198.57px" width="18" height="16" viewBox="0 0 18 16"><rect x="2.4" y="0" width="15.1" height="14.6" fill="#919191"/></svg>
<svg class="ic" style="left:23.5px;top:1237.57px" width="18" height="18" viewBox="0 0 18 18"><path d="M9.5 1.6 L17.5 15.8 L1.5 15.8 Z" fill="none" stroke="#8a7343" stroke-width="1.1" stroke-linejoin="miter"/><path d="M8.6 5.8 L10.2 5.8 L9.7 12 L9.1 12 Z" fill="#8a7343"/><circle cx="9.4" cy="13.8" r="0.8" fill="#8a7343"/></svg>
<svg class="ic" style="left:275.5px;top:1236.57px" width="18" height="16" viewBox="0 0 18 16"><rect x="2.4" y="0" width="15.1" height="14.6" fill="#919191"/></svg>
<svg class="ic" style="left:23.5px;top:1275.57px" width="18" height="18" viewBox="0 0 18 18"><path d="M9.5 1.6 L17.5 15.8 L1.5 15.8 Z" fill="none" stroke="#8a7343" stroke-width="1.1" stroke-linejoin="miter"/><path d="M8.6 5.8 L10.2 5.8 L9.7 12 L9.1 12 Z" fill="#8a7343"/><circle cx="9.4" cy="13.8" r="0.8" fill="#8a7343"/></svg>
<svg class="ic" style="left:275.5px;top:1274.57px" width="18" height="16" viewBox="0 0 18 16"><rect x="2.4" y="0" width="15.1" height="14.6" fill="#919191"/></svg>
<svg class="ic" style="left:23.5px;top:1313.57px" width="18" height="18" viewBox="0 0 18 18"><path d="M9.5 1.6 L17.5 15.8 L1.5 15.8 Z" fill="none" stroke="#8a7343" stroke-width="1.1" stroke-linejoin="miter"/><path d="M8.6 5.8 L10.2 5.8 L9.7 12 L9.1 12 Z" fill="#8a7343"/><circle cx="9.4" cy="13.8" r="0.8" fill="#8a7343"/></svg>
<svg class="ic" style="left:275.5px;top:1312.57px" width="18" height="16" viewBox="0 0 18 16"><rect x="2.4" y="0" width="15.1" height="14.6" fill="#919191"/></svg>
<svg class="ic" style="left:23.5px;top:1351.57px" width="18" height="18" viewBox="0 0 18 18"><path d="M9.5 1.6 L17.5 15.8 L1.5 15.8 Z" fill="none" stroke="#8a7343" stroke-width="1.1" stroke-linejoin="miter"/><path d="M8.6 5.8 L10.2 5.8 L9.7 12 L9.1 12 Z" fill="#8a7343"/><circle cx="9.4" cy="13.8" r="0.8" fill="#8a7343"/></svg>
<svg class="ic" style="left:275.5px;top:1350.57px" width="18" height="16" viewBox="0 0 18 16"><rect x="2.4" y="0" width="15.1" height="14.6" fill="#919191"/></svg>
<svg class="ic" style="left:23.5px;top:1389.57px" width="18" height="18" viewBox="0 0 18 18"><path d="M9.5 1.6 L17.5 15.8 L1.5 15.8 Z" fill="none" stroke="#8a7343" stroke-width="1.1" stroke-linejoin="miter"/><path d="M8.6 5.8 L10.2 5.8 L9.7 12 L9.1 12 Z" fill="#8a7343"/><circle cx="9.4" cy="13.8" r="0.8" fill="#8a7343"/></svg>
<svg class="ic" style="left:275.5px;top:1388.57px" width="18" height="16" viewBox="0 0 18 16"><rect x="2.4" y="0" width="15.1" height="14.6" fill="#919191"/></svg>
<svg class="ic" style="left:23.5px;top:1427.57px" width="18" height="18" viewBox="0 0 18 18"><path d="M9.5 1.6 L17.5 15.8 L1.5 15.8 Z" fill="none" stroke="#8a7343" stroke-width="1.1" stroke-linejoin="miter"/><path d="M8.6 5.8 L10.2 5.8 L9.7 12 L9.1 12 Z" fill="#8a7343"/><circle cx="9.4" cy="13.8" r="0.8" fill="#8a7343"/></svg>
<svg class="ic" style="left:275.5px;top:1426.57px" width="18" height="16" viewBox="0 0 18 16"><rect x="2.4" y="0" width="15.1" height="14.6" fill="#919191"/></svg>
<svg class="ic" style="left:23.5px;top:1465.57px" width="18" height="18" viewBox="0 0 18 18"><path d="M9.5 1.6 L17.5 15.8 L1.5 15.8 Z" fill="none" stroke="#8a7343" stroke-width="1.1" stroke-linejoin="miter"/><path d="M8.6 5.8 L10.2 5.8 L9.7 12 L9.1 12 Z" fill="#8a7343"/><circle cx="9.4" cy="13.8" r="0.8" fill="#8a7343"/></svg>
<svg class="ic" style="left:275.5px;top:1464.57px" width="18" height="16" viewBox="0 0 18 16"><rect x="2.4" y="0" width="15.1" height="14.6" fill="#919191"/></svg>
<svg class="ic" style="left:23.5px;top:1503.57px" width="18" height="18" viewBox="0 0 18 18"><path d="M9.5 1.6 L17.5 15.8 L1.5 15.8 Z" fill="none" stroke="#8a7343" stroke-width="1.1" stroke-linejoin="miter"/><path d="M8.6 5.8 L10.2 5.8 L9.7 12 L9.1 12 Z" fill="#8a7343"/><circle cx="9.4" cy="13.8" r="0.8" fill="#8a7343"/></svg>
<svg class="ic" style="left:275.5px;top:1502.57px" width="18" height="16" viewBox="0 0 18 16"><rect x="2.4" y="0" width="15.1" height="14.6" fill="#919191"/></svg>
<svg class="ic" style="left:23.5px;top:1541.57px" width="18" height="18" viewBox="0 0 18 18"><path d="M9.5 1.6 L17.5 15.8 L1.5 15.8 Z" fill="none" stroke="#8a7343" stroke-width="1.1" stroke-linejoin="miter"/><path d="M8.6 5.8 L10.2 5.8 L9.7 12 L9.1 12 Z" fill="#8a7343"/><circle cx="9.4" cy="13.8" r="0.8" fill="#8a7343"/></svg>
<svg class="ic" style="left:275.5px;top:1540.57px" width="18" height="16" viewBox="0 0 18 16"><rect x="2.4" y="0" width="15.1" height="14.6" fill="#919191"/></svg>
<svg class="ic" style="left:23.5px;top:1579.57px" width="18" height="18" viewBox="0 0 18 18"><path d="M9.5 1.6 L17.5 15.8 L1.5 15.8 Z" fill="none" stroke="#8a7343" stroke-width="1.1" stroke-linejoin="miter"/><path d="M8.6 5.8 L10.2 5.8 L9.7 12 L9.1 12 Z" fill="#8a7343"/><circle cx="9.4" cy="13.8" r="0.8" fill="#8a7343"/></svg>
<svg class="ic" style="left:275.5px;top:1578.57px" width="18" height="16" viewBox="0 0 18 16"><rect x="2.4" y="0" width="15.1" height="14.6" fill="#919191"/></svg>
<svg class="ic" style="left:23.5px;top:211.57px" width="18" height="18" viewBox="0 0 18 18"><path d="M9.5 1.6 L17.5 15.8 L1.5 15.8 Z" fill="none" stroke="#eab54a" stroke-width="1.1" stroke-linejoin="miter"/><path d="M8.6 5.8 L10.2 5.8 L9.7 12 L9.1 12 Z" fill="#eab54a"/><circle cx="9.4" cy="13.8" r="0.8" fill="#eab54a"/></svg>
<svg class="ic" style="left:257.5px;top:287.07px" width="19" height="19" viewBox="0 0 19 19"><path d="M0.3 0 L18.2 9.1 L0.3 18.2 Z" fill="#b2dd5a"/></svg>
<svg class="ic" style="left:509.5px;top:286.07px" width="18" height="16" viewBox="0 0 18 16"><rect x="2.6" y="0.3" width="4.7" height="15" fill="#f8f8f6"/><rect x="12.5" y="0.3" width="4.7" height="15" fill="#f8f8f6"/></svg>
<svg class="ic" style="left:599.5px;top:327.07px" width="18" height="16" viewBox="0 0 18 16"><path d="M3.6 2.2 L13.9 2.2 L8.75 11.6 Z" fill="none" stroke="#aee9f4" stroke-width="1.5"/></svg>
</body></html>
